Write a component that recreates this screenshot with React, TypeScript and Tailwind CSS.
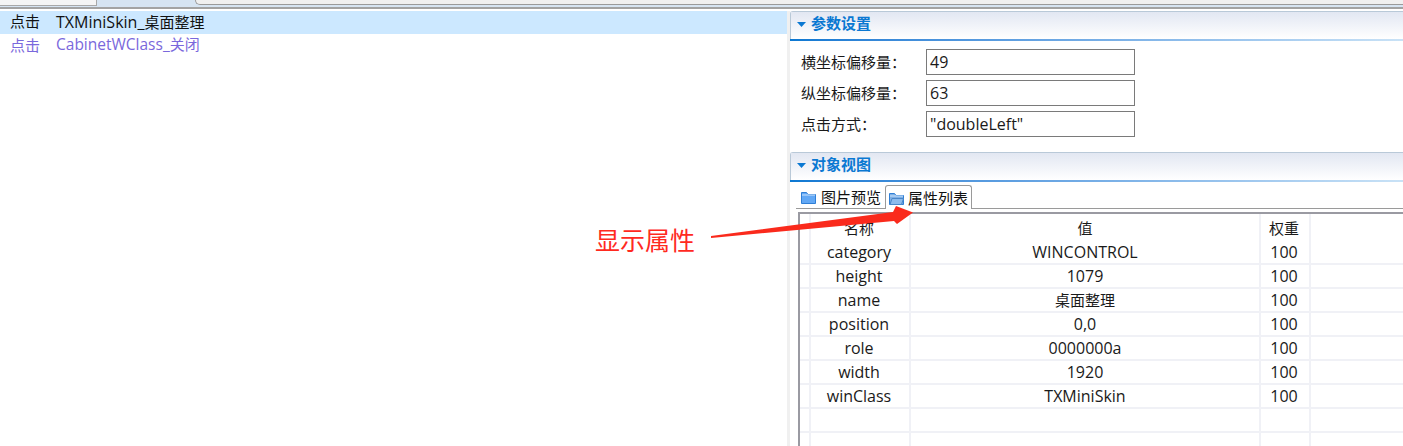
import type { ReactNode } from 'react';

const font = { fontFamily: '"Open Sans", "Noto Sans CJK SC", sans-serif' };

const params = [
  { label: '横坐标偏移量：', value: '49' },
  { label: '纵坐标偏移量：', value: '63' },
  { label: '点击方式：', value: '"doubleLeft"' },
];

// CJK glyphs sit a size below the latin text in the reference
const Cjk = ({ children }: { children: ReactNode }) => <span className="text-[15px]">{children}</span>;

const rows: ReactNode[][] = [
  ['category', 'WINCONTROL', '100'],
  ['height', '1079', '100'],
  ['name', <Cjk>桌面整理</Cjk>, '100'],
  ['position', '0,0', '100'],
  ['role', '0000000a', '100'],
  ['width', '1920', '100'],
  ['winClass', 'TXMiniSkin', '100'],
  ['', '', ''],
  ['', '', ''],
];

function SectionHeader({ title }: { title: string }) {
  return (
    <div className="h-[30px] shrink-0 flex flex-col border-t border-l border-[#b9c9d8] rounded-tl-[3px]">
      <div className="flex-1 flex items-center pl-[6px] pb-[4px] gap-[5px] bg-gradient-to-b from-[#e2e7f2] to-white">
        <svg width="9" height="5" viewBox="0 0 9 5" className="mt-[2px]">
          <path d="M0 0h9L4.5 5z" fill="#0a78d2" />
        </svg>
        <span className="text-[15px] font-bold text-[#0a78d2] leading-none">{title}</span>
      </div>
      <div className="h-[2px] -ml-px bg-gradient-to-r from-[#0a78d2] to-[#c9e2f6]" />
    </div>
  );
}

function Folder({ open }: { open?: boolean }) {
  return (
    <svg width="15" height="13" viewBox="0 0 15 13" className="shrink-0">
      <path d="M.5 1.5h5l1.5 2h7.5v9H.5z" fill={open ? '#7fb0e6' : '#62a8f5'} stroke="#2f7fd6" />
      <path d="M1 4h13" stroke="#cfe4fb" />
      {open && <path d="M3 6.5h11.5l-2 6H1z" fill="#8dbbec" stroke="#4a86c8" />}
    </svg>
  );
}

function Row({ cells, header }: { cells: ReactNode[]; header?: boolean }) {
  return (
    <div className={`flex text-[#1a1a1a] ${header ? 'h-[27px] leading-[29px] text-[15px]' : 'h-[24px] leading-[22px] text-[16px] border-b-2 border-[#f0f1f6]'}`}>
      <div className="w-[11px] shrink-0 border-r-2 border-[#f0f1f6]" />
      <div className="w-[100px] shrink-0 text-center pr-[2px] border-r-2 border-[#f0f1f6]">{cells[0]}</div>
      <div className="w-[350px] shrink-0 text-center border-r-2 border-[#f0f1f6]">{cells[1]}</div>
      <div className="w-[50px] shrink-0 text-center pr-[2px] border-r-2 border-[#f0f1f6]">{cells[2]}</div>
      <div className="flex-1" />
    </div>
  );
}

export default function App() {
  return (
    <div className="relative w-[1403px] h-[446px] overflow-hidden bg-white flex flex-col" style={font}>
      {/* Top strip left over from the window above */}
      <div className="h-[9px] shrink-0 flex border-b-2 border-[#a3a3a3] bg-[#d6e4f2]">
        <div className="w-[97px] h-[6px] bg-[#f5f5f5] border-b border-r border-[#a8a8a8]" />
        <div className="w-[98px]" />
        <div className="flex-1 h-[5px] bg-[#f0f0f0] border-b border-l border-[#9a9a9a] rounded-bl-[8px]" />
      </div>

      <div className="flex-1 flex min-h-0 pt-[2px]">
        {/* Step list */}
        <div className="w-[787px] shrink-0 text-[16px]">
          <div className="h-[23px] bg-[#cce8ff] text-[#111] flex items-center pl-[10px] gap-[16px] pb-[2px]">
            <Cjk>点击</Cjk>
            <span>TXMiniSkin_<Cjk>桌面整理</Cjk></span>
          </div>
          <div className="h-[24px] text-[#7a68dc] flex items-center pl-[10px] gap-[16px] pb-[2px]">
            <Cjk>点击</Cjk>
            <span className="text-[15.5px]">CabinetWClass_<Cjk>关闭</Cjk></span>
          </div>
        </div>

        <div className="w-[3px] shrink-0 bg-[#f0f0f0]" />

        {/* Right panel */}
        <div className="flex-1 min-w-0 flex flex-col">
          <SectionHeader title="参数设置" />
          <div className="h-[111px] shrink-0 pt-[8px] pl-[11px] flex flex-col gap-[5px]">
            {params.map((p) => (
              <div key={p.label} className="h-[26px] flex items-center text-[15px] text-[#1a1a1a]">
                <span className="w-[125px] shrink-0">{p.label}</span>
                <div className="w-[209px] h-[26px] border border-[#7a7a7a] pl-[3px] leading-[24px] text-[16px]">{p.value}</div>
              </div>
            ))}
          </div>

          <SectionHeader title="对象视图" />

          {/* Tabs */}
          <div className="h-[27px] shrink-0 flex items-end pl-[6px] text-[15px] text-[#111]">
            <div className="w-[89px] h-[24px] flex items-center gap-[5px] pl-[5px] pt-[2px] border-b border-[#9a9a9a]">
              <Folder />
              <span>图片预览</span>
            </div>
            <div className="w-[87px] h-[24px] flex items-center gap-[4px] pl-[3px] pt-[2px] border border-b-0 border-[#9a9a9a] rounded-t-[3px]">
              <Folder open />
              <span>属性列表</span>
            </div>
            <div className="flex-1 border-b border-[#9a9a9a]" />
          </div>

          {/* Property table */}
          <div className="ml-[8px] mt-[3px] flex-1 min-h-0 border-t-2 border-l-2 border-[#9a9aa2] overflow-hidden">
            <Row cells={['名称', '值', '权重']} header />
            {rows.map((r, i) => (
              <Row key={i} cells={r} />
            ))}
          </div>
        </div>
      </div>

      {/* Annotation */}
      <span className="absolute left-[595px] top-[221px] text-[25px] leading-[36px] text-[#ff2a1f]" style={{ fontFamily: '"Noto Sans CJK SC", sans-serif' }}>显示属性</span>
      <svg className="absolute left-0 top-0 pointer-events-none" width="1403" height="446">
        <polygon points="711,238 711,236 893,212 896,206 913,212.5 897,224 894,221" fill="#fa2a1c" />
      </svg>
    </div>
  );
}
